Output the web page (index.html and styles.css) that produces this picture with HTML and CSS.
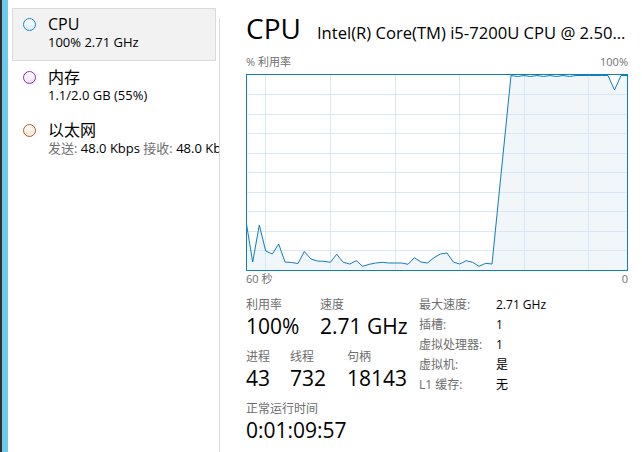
FILE: index.html
```html
<!DOCTYPE html>
<html lang="zh-CN">
<head>
<meta charset="utf-8">
<title>任务管理器 - 性能</title>
<link rel="stylesheet" href="styles.css">
</head>
<body>
<div class="app">
  <div class="edge"></div>
  <nav class="sidebar">
    <div class="item selected">
      <svg class="dot" width="13" height="13" viewBox="0 0 13 13">
        <defs><linearGradient id="gc" x1="0" y1="0" x2="0" y2="1"><stop offset="0" stop-color="#ffffff"/><stop offset="1" stop-color="#dcebf6"/></linearGradient></defs>
        <circle cx="6.5" cy="6.5" r="6" fill="url(#gc)" stroke="#1a86cf" stroke-width="1"/>
      </svg>
      <div class="item-text">
        <div class="item-title">CPU</div>
        <div class="item-sub">100% 2.71 GHz</div>
      </div>
    </div>
    <div class="item">
      <svg class="dot" width="13" height="13" viewBox="0 0 13 13">
        <defs><linearGradient id="gm" x1="0" y1="0" x2="0" y2="1"><stop offset="0" stop-color="#ffffff"/><stop offset="1" stop-color="#f0e0f5"/></linearGradient></defs>
        <circle cx="6.5" cy="6.5" r="6" fill="url(#gm)" stroke="#9528b4" stroke-width="1"/>
      </svg>
      <div class="item-text">
        <div class="item-title">内存</div>
        <div class="item-sub">1.1/2.0 GB (55%)</div>
      </div>
    </div>
    <div class="item">
      <svg class="dot" width="13" height="13" viewBox="0 0 13 13">
        <defs><linearGradient id="ge" x1="0" y1="0" x2="0" y2="1"><stop offset="0" stop-color="#ffffff"/><stop offset="1" stop-color="#f8e6d6"/></linearGradient></defs>
        <circle cx="6.5" cy="6.5" r="6" fill="url(#ge)" stroke="#b2611a" stroke-width="1"/>
      </svg>
      <div class="item-text">
        <div class="item-title">以太网</div>
        <div class="item-sub"><span class="muted">发送:</span> 48.0 Kbps <span class="muted">接收:</span> 48.0 Kbps</div>
      </div>
    </div>
  </nav>
  <div class="divider"></div>
  <main class="panel">
    <div class="header">
      <span class="h-title">CPU</span>
      <span class="h-model">Intel(R) Core(TM) i5-7200U CPU @ 2.50...</span>
    </div>
    <div class="axis axis-top"><span>% 利用率</span><span>100%</span></div>
    <div class="graph">
      <svg width="380" height="195" viewBox="247 72 380 195">
        <polygon class="area" points="246,218 252.7,259 259.3,222 265.7,248 272.3,251 278.7,241 285,259 291.7,259.5 298,260.5 304.3,248.5 311,256 317.3,258 323.7,258.3 330.3,259.3 336.7,251.3 343.3,259.3 349.7,261 356.3,257.7 362.7,263.3 369.3,261.3 375.7,260 382.3,259.3 388.7,260 395.3,260 401.7,260 408,261.3 414.3,254.7 421,259 427.3,260 434,254.7 440.3,251 447,250 453.3,259 459.7,261 466.3,257.7 472.7,259.3 479,263.3 485.7,260.3 492,261 511,72.5 517.5,73.5 524,72.5 530.5,73.5 537,72.5 543.5,73.5 550,72.5 556.5,73.5 563,72.5 569.5,73.5 576,72.5 582,72.5 588.5,72.5 595,72.5 601.5,72.5 608,72.5 614.5,87 621,72.5 628,72.5 628,268 246,268"/>
        <g class="grid">
          <line x1="246" y1="91.5" x2="628" y2="91.5"/>
          <line x1="246" y1="111.5" x2="628" y2="111.5"/>
          <line x1="246" y1="130.5" x2="628" y2="130.5"/>
          <line x1="246" y1="150.5" x2="628" y2="150.5"/>
          <line x1="246" y1="169.5" x2="628" y2="169.5"/>
          <line x1="246" y1="189.5" x2="628" y2="189.5"/>
          <line x1="246" y1="208.5" x2="628" y2="208.5"/>
          <line x1="246" y1="228.5" x2="628" y2="228.5"/>
          <line x1="246" y1="247.5" x2="628" y2="247.5"/>
          <line x1="265.5" y1="71" x2="265.5" y2="268"/>
          <line x1="330.5" y1="71" x2="330.5" y2="268"/>
          <line x1="395.5" y1="71" x2="395.5" y2="268"/>
          <line x1="459.5" y1="71" x2="459.5" y2="268"/>
          <line x1="524.5" y1="71" x2="524.5" y2="268"/>
          <line x1="588.5" y1="71" x2="588.5" y2="268"/>
        </g>
        <polyline class="line" points="246,218 252.7,259 259.3,222 265.7,248 272.3,251 278.7,241 285,259 291.7,259.5 298,260.5 304.3,248.5 311,256 317.3,258 323.7,258.3 330.3,259.3 336.7,251.3 343.3,259.3 349.7,261 356.3,257.7 362.7,263.3 369.3,261.3 375.7,260 382.3,259.3 388.7,260 395.3,260 401.7,260 408,261.3 414.3,254.7 421,259 427.3,260 434,254.7 440.3,251 447,250 453.3,259 459.7,261 466.3,257.7 472.7,259.3 479,263.3 485.7,260.3 492,261 511,72.5 517.5,73.5 524,72.5 530.5,73.5 537,72.5 543.5,73.5 550,72.5 556.5,73.5 563,72.5 569.5,73.5 576,72.5 582,72.5 588.5,72.5 595,72.5 601.5,72.5 608,72.5 614.5,87 621,72.5 628,72.5"/>
      </svg>
    </div>
    <div class="axis axis-bottom"><span>60 秒</span><span>0</span></div>
    <div class="stats">
      <div class="stats-left">
        <div class="srow">
          <div class="stat c1"><div class="slabel">利用率</div><div class="svalue">100%</div></div>
          <div class="stat"><div class="slabel">速度</div><div class="svalue">2.71 GHz</div></div>
        </div>
        <div class="srow">
          <div class="stat c2"><div class="slabel">进程</div><div class="svalue">43</div></div>
          <div class="stat c3"><div class="slabel">线程</div><div class="svalue">732</div></div>
          <div class="stat"><div class="slabel">句柄</div><div class="svalue">18143</div></div>
        </div>
        <div class="srow">
          <div class="stat"><div class="slabel">正常运行时间</div><div class="svalue">0:01:09:57</div></div>
        </div>
      </div>
      <div class="stats-right">
        <span class="k">最大速度:</span><span class="v">2.71 GHz</span>
        <span class="k">插槽:</span><span class="v">1</span>
        <span class="k">虚拟处理器:</span><span class="v">1</span>
        <span class="k">虚拟机:</span><span class="v">是</span>
        <span class="k">L1 缓存:</span><span class="v">无</span>
      </div>
    </div>
  </main>
</div>
</body>
</html>
```
FILE: styles.css
```css
html, body {
  margin: 0;
  padding: 0;
  background: #ffffff;
}
body {
  font-family: "Open Sans", "Noto Sans CJK SC", sans-serif;
  color: #000000;
  width: 642px;
  height: 452px;
  overflow: hidden;
}
.app {
  display: flex;
  height: 452px;
}
.edge {
  width: 6px;
  flex: none;
  background: #6ccaec;
  border-left: 2px solid #2e2e30;
}
.sidebar {
  width: 204px;
  flex: none;
  padding: 8px 3px 0 4px;
  overflow: hidden;
}
.item {
  display: flex;
  height: 46px;
  padding: 5px 0 0 10px;
  border: 1px solid transparent;
  white-space: nowrap;
}
.item.selected {
  background: #f2f2f2;
  border-color: #dadada;
}
.dot {
  flex: none;
  margin-top: 4px;
  margin-right: 12px;
}
.item-title {
  font-size: 16px;
  line-height: 20px;
}
.item-sub {
  font-size: 13px;
  line-height: 16px;
}
.muted {
  color: #6f6f6f;
}
.divider {
  width: 1px;
  flex: none;
  margin-top: 18px;
  background: #d9d9d9;
}
.panel {
  flex: 1;
  padding: 10px 14px 0 26px;
  min-width: 0;
}
.header {
  display: flex;
  align-items: baseline;
  gap: 16px;
  white-space: nowrap;
  line-height: 36px;
}
.h-title {
  font-size: 28px;
}
.h-model {
  font-size: 16.6px;
}
.axis {
  display: flex;
  justify-content: space-between;
  font-size: 11px;
  line-height: 16px;
  color: #707070;
  width: 382px;
}
.axis-top {
  margin-top: 3px;
  margin-bottom: 4px;
}
.axis-bottom {
  margin-top: 0;
}
.graph {
  width: 380px;
  height: 195px;
  border: 1px solid #117dbb;
}
.graph svg {
  display: block;
}
.area {
  fill: #f1f6fa;
}
.grid line {
  stroke: #d9e8f4;
  stroke-width: 1;
}
.line {
  fill: none;
  stroke: #117dbb;
  stroke-width: 1;
  stroke-linejoin: miter;
}
.stats {
  display: flex;
  margin-top: 8px;
}
.stats-left {
  width: 173px;
  flex: none;
  padding-top: 1px;
}
.srow {
  display: flex;
  margin-bottom: 9px;
}
.stat.c1 { width: 74px; }
.stat.c2 { width: 44px; }
.stat.c3 { width: 57px; }
.slabel {
  font-size: 12px;
  line-height: 18px;
  color: #6d6d6d;
  white-space: nowrap;
}
.svalue {
  font-size: 21px;
  line-height: 26px;
  margin-top: -1px;
  white-space: nowrap;
}
.stats-right {
  display: grid;
  grid-template-columns: 77px auto;
  grid-auto-rows: 20px;
  font-size: 12px;
  line-height: 20px;
  align-content: start;
}
.k {
  color: #6d6d6d;
  white-space: nowrap;
}
.v {
  white-space: nowrap;
}
```
